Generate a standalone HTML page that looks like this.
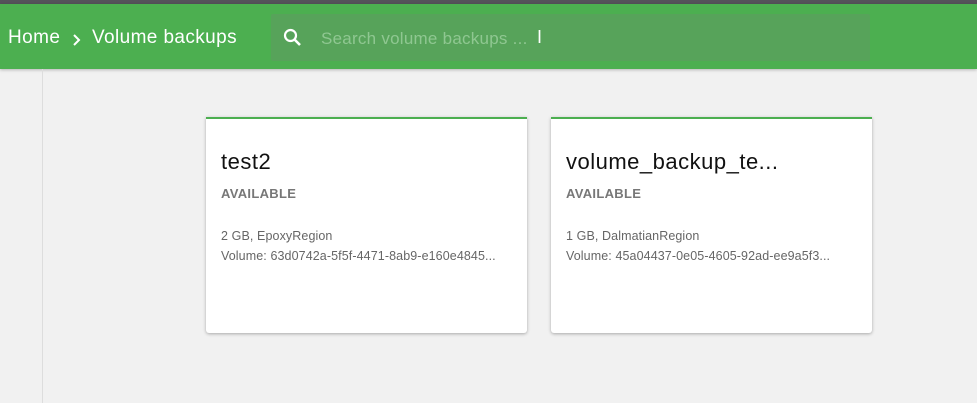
<!DOCTYPE html><html><head><style>
body{margin:0;width:977px;height:403px;background:#f1f1f1;font-family:"Liberation Sans",sans-serif;position:relative;overflow:hidden}
.top{position:absolute;left:0;top:0;width:977px;height:4px;background:#55525a}
.hdr{position:absolute;left:0;top:4px;width:977px;height:65px;background:#4caf50;box-shadow:0 1px 3px rgba(0,0,0,.25)}
.hdr .c{position:absolute;top:23px;color:#fff;font-size:19px;letter-spacing:.4px;white-space:nowrap}
.search{position:absolute;left:271px;top:10px;width:599px;height:47px;background:#57a35a;border-radius:2px}
.search span{position:absolute;left:50px;top:15px;color:#8fc791;font-size:17px;letter-spacing:.25px}
.side{position:absolute;left:42px;top:69px;width:1px;height:334px;background:#ddd}
.card{position:absolute;top:117px;width:321px;height:214px;background:#fff;border-top:2px solid #4caf50;border-radius:0 0 3px 3px;box-shadow:0 1px 3px rgba(0,0,0,.3)}
.t{position:absolute;left:15px;top:30px;font-size:22px;color:#111;letter-spacing:.5px}
.s{position:absolute;left:15px;top:67px;font-size:13px;font-weight:bold;color:#777;letter-spacing:.3px}
.d{position:absolute;left:15px;top:107px;font-size:12.5px;color:#666;line-height:20px;white-space:nowrap;letter-spacing:.1px}
</style></head><body>
<div class="top"></div>
<div class="hdr"><div class="c" style="left:8px">Home</div><svg style="position:absolute;left:72px;top:29px" width="10" height="14" viewBox="0 0 10 14"><path d="M2 2l5 5-5 5" fill="none" stroke="#fff" stroke-width="2"/></svg><div class="c" style="left:92px">Volume backups</div>
<div class="search"><svg style="position:absolute;left:12px;top:14px" width="20" height="20" viewBox="0 0 20 20"><circle cx="7.5" cy="7.5" r="5.5" fill="none" stroke="#fff" stroke-width="2.2"/><path d="M11.5 11.5L17 17" stroke="#fff" stroke-width="2.6"/></svg><span>Search volume backups ...</span><span style="left:266px;top:13px;color:#fff;font-size:18px">I</span></div></div>
<div class="side"></div>
<div class="card" style="left:206px"><div class="t">test2</div><div class="s">AVAILABLE</div><div class="d">2 GB, EpoxyRegion<br>Volume: 63d0742a-5f5f-4471-8ab9-e160e4845...</div></div>
<div class="card" style="left:551px"><div class="t">volume_backup_te...</div><div class="s">AVAILABLE</div><div class="d">1 GB, DalmatianRegion<br>Volume: 45a04437-0e05-4605-92ad-ee9a5f3...</div></div>
</body></html>
